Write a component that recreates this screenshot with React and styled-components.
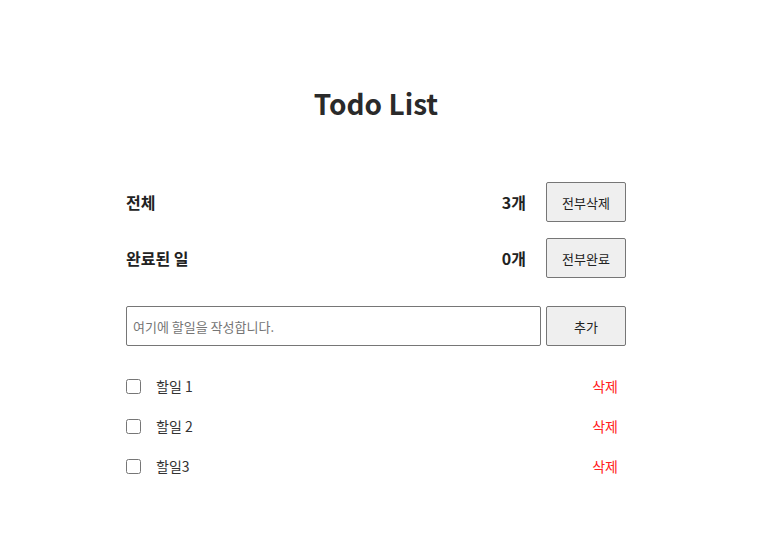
import React, { useState } from "react";
import styled, { createGlobalStyle } from "styled-components";

const GlobalStyle = createGlobalStyle`
	body {
		margin: 0;
		background: #fff;
		font-family: "Noto Sans CJK KR", "Noto Sans", sans-serif;
		color: #222;
	}
`;

const Page = styled.div`
	display: flex;
	justify-content: center;
	padding: 76px 12px 40px 0;
`;

const Wrapper = styled.div`
	width: 500px;
`;

const Title = styled.h1`
	margin: 0 0 52px;
	text-align: center;
	font-size: 28px;
	font-weight: 700;
	line-height: 54px;
	color: #2a2a2a;
`;

const StatRow = styled.div`
	display: flex;
	align-items: center;
	height: 40px;
	margin-bottom: 16px;
`;

const StatLabel = styled.span`
	flex: 1;
	font-size: 16px;
	font-weight: 700;
`;

const StatCount = styled.span`
	font-size: 16px;
	font-weight: 700;
	margin-right: 20px;
`;

const Button = styled.button`
	width: 80px;
	height: 40px;
	flex-shrink: 0;
	font-family: inherit;
	font-size: 13px;
	color: #222;
	background: #efefef;
	border: 1px solid #767676;
	border-radius: 2px;
	padding: 0;
`;

const AddForm = styled.form`
	display: flex;
	gap: 5px;
	margin-top: 28px;
	margin-bottom: 20px;
`;

const Input = styled.input`
	flex: 1;
	height: 40px;
	box-sizing: border-box;
	border: 1px solid #767676;
	border-radius: 2px;
	padding: 0 6px;
	font-family: inherit;
	font-size: 13px;
	color: #222;

	&::placeholder {
		color: #757575;
	}
`;

const TodoList = styled.ul`
	list-style: none;
	margin: 0;
	padding: 0;
`;

const TodoItem = styled.li`
	display: flex;
	align-items: center;
	height: 40px;
	padding-right: 8px;
`;

const Check = styled.input`
	width: 15px;
	height: 15px;
	margin: 0 15px 0 0;
`;

const TodoText = styled.span`
	flex: 1;
	font-size: 14px;
	color: #333;
`;

const DeleteBtn = styled.span`
	font-size: 14px;
	color: #ff2020;
	cursor: pointer;
`;

const App = () => {
	const [todos] = useState([
		{ id: 1, text: "할일 1" },
		{ id: 2, text: "할일 2" },
		{ id: 3, text: "할일3" },
	]);

	return (
		<>
			<GlobalStyle />
			<Page>
				<Wrapper>
					<Title>Todo List</Title>
					<StatRow>
						<StatLabel>전체</StatLabel>
						<StatCount>{todos.length}개</StatCount>
						<Button>전부삭제</Button>
					</StatRow>
					<StatRow>
						<StatLabel>완료된 일</StatLabel>
						<StatCount>0개</StatCount>
						<Button>전부완료</Button>
					</StatRow>
					<AddForm onSubmit={(e) => e.preventDefault()}>
						<Input placeholder="여기에 할일을 작성합니다." />
						<Button type="submit">추가</Button>
					</AddForm>
					<TodoList>
						{todos.map((todo) => (
							<TodoItem key={todo.id}>
								<Check type="checkbox" />
								<TodoText>{todo.text}</TodoText>
								<DeleteBtn>삭제</DeleteBtn>
							</TodoItem>
						))}
					</TodoList>
				</Wrapper>
			</Page>
		</>
	);
};

export default App;
